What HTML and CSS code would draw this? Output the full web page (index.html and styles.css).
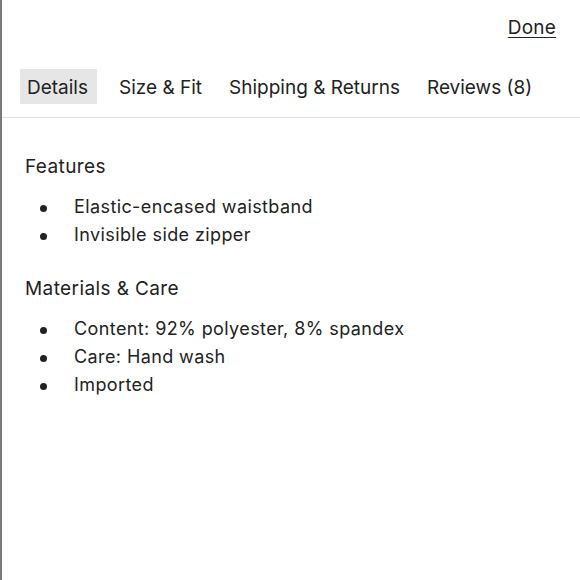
FILE: index.html
```html
<!DOCTYPE html>
<html lang="en">
<head>
  <meta charset="UTF-8" />
  <meta name="viewport" content="width=device-width, initial-scale=1.0" />
  <title>Product Details</title>
  <link rel="stylesheet" href="styles.css">
</head>
<body>

<div class="sheet">
  <div class="top-bar">
    <a href="#" class="done-link">Done</a>
  </div>

  <nav class="tabs">
    <a href="#" class="tab active">Details</a>
    <a href="#" class="tab">Size &amp; Fit</a>
    <a href="#" class="tab">Shipping &amp; Returns</a>
    <a href="#" class="tab">Reviews (8)</a>
  </nav>

  <main class="details">
    <h3>Features</h3>
    <ul>
      <li>Elastic-encased waistband</li>
      <li>Invisible side zipper</li>
    </ul>

    <h3>Materials &amp; Care</h3>
    <ul>
      <li>Content: 92% polyester, 8% spandex</li>
      <li>Care: Hand wash</li>
      <li>Imported</li>
    </ul>
  </main>
</div>

</body>
</html>
```

FILE: styles.css
```css
body {
  font-family: 'Inter', 'Liberation Sans', sans-serif;
  margin: 0;
  padding: 0;
  background-color: #fff;
  color: #222;
}
.sheet {
  min-height: 580px;
  border-left: 2px solid #7a7a7a;
  box-sizing: border-box;
}
.top-bar {
  display: flex;
  justify-content: flex-end;
  padding: 17px 24px 0 0;
  height: 52px;
}
.done-link {
  color: #222;
  font-size: 19px;
  line-height: 22px;
  letter-spacing: 0.2px;
  text-decoration: underline;
  text-underline-offset: 3px;
}
.tabs {
  display: flex;
  align-items: center;
  gap: 15px;
  padding: 0 0 13px 18px;
  border-bottom: 1px solid #e2e2e2;
}
.tab {
  color: #222;
  font-size: 19px;
  text-decoration: none;
  padding: 8px 6px 5px;
  line-height: 22px;
}
.tab.active {
  background-color: #e6e6e6;
  padding-left: 7px;
  padding-right: 9px;
  margin-right: 1px;
}
.details {
  padding: 37px 0 0 23px;
}
.details h3 {
  font-size: 19px;
  font-weight: 400;
  letter-spacing: 0.4px;
  margin: 0;
  line-height: 24px;
}
.details ul {
  list-style: none;
  margin: 14px 0 28px 15px;
  padding: 0;
}
.details li {
  display: flex;
  align-items: center;
  font-size: 18px;
  letter-spacing: 0.4px;
  line-height: 28px;
}
.details li::before {
  content: "";
  width: 7px;
  height: 7px;
  margin: 3px 27px 0 0;
  border-radius: 50%;
  background-color: #222;
  flex-shrink: 0;
}
```
